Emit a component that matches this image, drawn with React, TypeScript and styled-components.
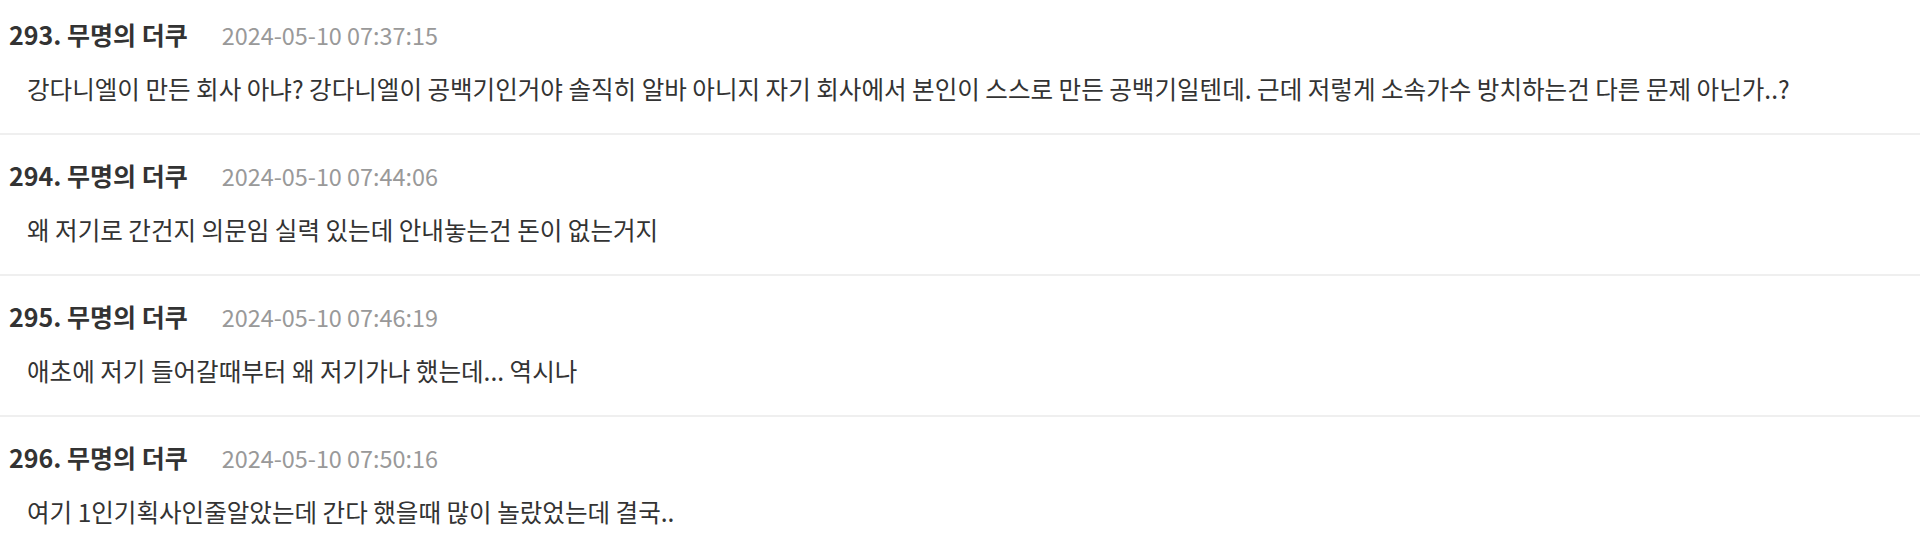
import styled, { createGlobalStyle } from "styled-components";

const GlobalStyle = createGlobalStyle`
  html, body {
    margin: 0;
    padding: 0;
    background: #fff;
  }
  body {
    font-family: "Noto Sans CJK KR", "Noto Sans", sans-serif;
    -webkit-font-smoothing: antialiased;
  }
`;

const comments = [
  {
    no: 293,
    name: "무명의 더쿠",
    date: "2024-05-10 07:37:15",
    text: "강다니엘이 만든 회사 아냐? 강다니엘이 공백기인거야 솔직히 알바 아니지 자기 회사에서 본인이 스스로 만든 공백기일텐데. 근데 저렇게 소속가수 방치하는건 다른 문제 아닌가..?",
  },
  {
    no: 294,
    name: "무명의 더쿠",
    date: "2024-05-10 07:44:06",
    text: "왜 저기로 간건지 의문임 실력 있는데 안내놓는건 돈이 없는거지",
  },
  {
    no: 295,
    name: "무명의 더쿠",
    date: "2024-05-10 07:46:19",
    text: "애초에 저기 들어갈때부터 왜 저기가나 했는데... 역시나",
  },
  {
    no: 296,
    name: "무명의 더쿠",
    date: "2024-05-10 07:50:16",
    text: "여기 1인기획사인줄알았는데 간다 했을때 많이 놀랐었는데 결국..",
  },
];

const List = styled.ul`
  list-style: none;
  margin: 0;
  padding: 0;
`;

const Item = styled.li`
  padding: 25px 0 29px 9px;
  border-bottom: 2px solid #efefef;

  &:first-child {
    padding-top: 19px;
  }
`;

const Header = styled.div`
  display: flex;
  align-items: baseline;
  gap: 34px;
  height: 30px;
  line-height: 30px;
`;

const Author = styled.span`
  font-size: 25px;
  font-weight: 700;
  color: #333;
`;

const Stamp = styled.span`
  font-size: 23.4px;
  color: #999;
`;

const Body = styled.p`
  margin: 25px 0 0 18px;
  font-size: 24.55px;
  line-height: 30px;
  color: #333;
  white-space: nowrap;
`;

export default function App() {
  return (
    <>
      <GlobalStyle />
      <List>
        {comments.map((c) => (
          <Item key={c.no}>
            <Header>
              <Author>
                {c.no}. {c.name}
              </Author>
              <Stamp>{c.date}</Stamp>
            </Header>
            <Body>{c.text}</Body>
          </Item>
        ))}
      </List>
    </>
  );
}
